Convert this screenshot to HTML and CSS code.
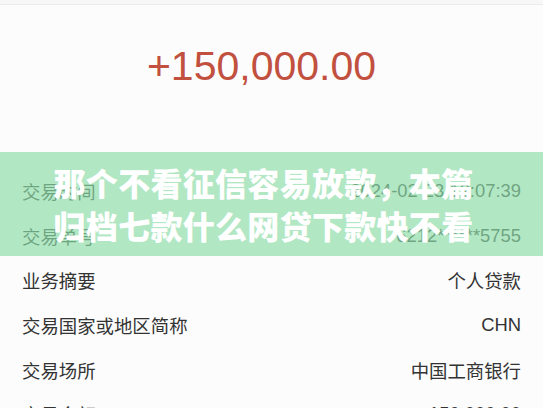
FILE: index.html
```html
<!DOCTYPE html>
<html lang="zh-CN">
<head>
    <meta charset="UTF-8">
    <meta name="viewport" content="width=device-width, initial-scale=1.0">
    <title>交易详情</title>
    <link rel="stylesheet" href="styles.css">
</head>
<body>

<div class="page">
    <div class="topbar"></div>

    <!-- 金额 -->
    <div class="amount">+150,000.00</div>

    <!-- 交易明细 -->
    <div class="details">
        <div class="row"><span class="label">交易时间</span><span class="value">2024-02-23 12:07:39</span></div>
        <div class="row"><span class="label">交易单号</span><span class="value">6212******5755</span></div>
        <div class="row"><span class="label">业务摘要</span><span class="value">个人贷款</span></div>
        <div class="row"><span class="label">交易国家或地区简称</span><span class="value">CHN</span></div>
        <div class="row"><span class="label">交易场所</span><span class="value">中国工商银行</span></div>
        <div class="row"><span class="label">交易金额</span><span class="value">150,000.00</span></div>
    </div>

    <!-- 标题横幅 -->
    <div class="banner">
        <p>那个不看征信容易放款，本篇<br>归档七款什么网贷下款快不看</p>
    </div>
</div>

</body>
</html>
```

FILE: styles.css
```css
* {
    margin: 0;
    padding: 0;
    box-sizing: border-box;
}

body {
    font-family: 'Liberation Sans', 'Noto Sans CJK SC', sans-serif;
    background-color: #fcfcfc;
    color: #333;
    overflow: hidden;
}

.page {
    position: relative;
    width: 543px;
    height: 408px;
    overflow: hidden;
}

.topbar {
    height: 5px;
    background-color: #f7f7f7;
    border-bottom: 1px solid #ebebeb;
}

.amount {
    text-align: center;
    font-size: 41px;
    line-height: 48px;
    color: #c2503f;
    padding: 37px 20px 79px 0;
}

.details {
    padding: 0 22px;
}

.row {
    display: flex;
    justify-content: space-between;
    align-items: center;
    height: 44.6px;
    font-size: 18.4px;
}

.label {
    color: #333;
}

.value {
    color: #333;
}

.banner {
    position: absolute;
    top: 152px;
    left: 0;
    right: 0;
    height: 104px;
    padding-right: 16px;
    background-color: rgba(141, 220, 168, 0.67);
    display: flex;
    align-items: center;
    justify-content: center;
}

.banner p {
    font-family: 'Noto Sans CJK SC', sans-serif;
    font-weight: 900;
    font-size: 32px;
    line-height: 43px;
    color: #fff;
    text-align: center;
    letter-spacing: 0.3px;
}
```
